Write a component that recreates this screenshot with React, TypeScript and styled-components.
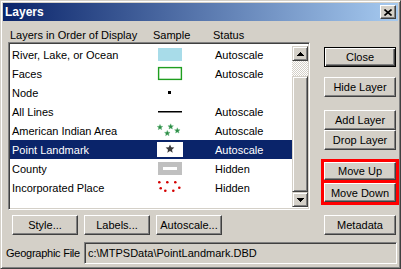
import styled, { createGlobalStyle } from "styled-components";

type SymbolKind = "water" | "faces" | "node" | "lines" | "area" | "landmark" | "county" | "place";

type Layer = {
  name: string;
  status: string;
  symbol: SymbolKind;
  selected?: boolean;
};

const layers: Layer[] = [
  { name: "River, Lake, or Ocean", status: "Autoscale", symbol: "water" },
  { name: "Faces", status: "Autoscale", symbol: "faces" },
  { name: "Node", status: "", symbol: "node" },
  { name: "All Lines", status: "Autoscale", symbol: "lines" },
  { name: "American Indian Area", status: "Autoscale", symbol: "area" },
  { name: "Point Landmark", status: "Autoscale", symbol: "landmark", selected: true },
  { name: "County", status: "Hidden", symbol: "county" },
  { name: "Incorporated Place", status: "Hidden", symbol: "place" },
];

const starPoints = (cx: number, cy: number, r: number) => {
  const pts: string[] = [];
  for (let i = 0; i < 10; i++) {
    const rad = i % 2 === 0 ? r : r * 0.45;
    const a = -Math.PI / 2 + (i * Math.PI) / 5;
    pts.push(`${(cx + rad * Math.cos(a)).toFixed(2)},${(cy + rad * Math.sin(a)).toFixed(2)}`);
  }
  return pts.join(" ");
};

function LayerSymbol({ kind }: { kind: SymbolKind }) {
  return (
    <svg width="28" height="19" viewBox="0 0 28 19">
      {kind === "water" && <rect x="2" y="3" width="24" height="13" fill="#a8dce9" />}
      {kind === "faces" && (
        <rect x="2.6" y="3.6" width="22.8" height="11.8" fill="#fff" stroke="#1f9e1f" strokeWidth="1.4" />
      )}
      {kind === "node" && <rect x="12" y="8" width="3" height="3" fill="#000" />}
      {kind === "lines" && <rect x="2" y="9" width="24" height="1.5" fill="#000" />}
      {kind === "area" &&
        [
          [4, 6.3],
          [14.7, 5.7],
          [11.3, 12.3],
          [21.3, 9.7],
        ].map(([x, y], i) => (
          <polygon key={i} points={starPoints(x, y, 2.9)} fill="#2e8b45" stroke="#4caf6a" strokeWidth="0.4" />
        ))}
      {kind === "landmark" && (
        <>
          <rect x="1" y="2" width="26" height="15" fill="#fff" />
          <polygon points={starPoints(14, 9, 4.6)} fill="#3a3a3a" />
        </>
      )}
      {kind === "county" && (
        <>
          <rect x="2" y="3" width="24" height="13" fill="#c0c0c0" />
          <rect x="7" y="8" width="14" height="3" fill="#fff" />
        </>
      )}
      {kind === "place" &&
        [
          [3.3, 4.3],
          [11.3, 4.3],
          [19.3, 4.3],
          [4.7, 10.3],
          [9.3, 12.7],
          [17.3, 12.7],
          [23.3, 9.7],
        ].map(([x, y], i) => <circle key={i} cx={x} cy={y} r="1.3" fill="#d40000" />)}
    </svg>
  );
}

function Arrow({ down }: { down?: boolean }) {
  return (
    <svg width="7" height="4" viewBox="0 0 7 4" shapeRendering="crispEdges">
      <polygon points={down ? "0,0 7,0 3.5,4" : "0,4 7,4 3.5,0"} fill="#000" />
    </svg>
  );
}

export default function App() {
  return (
    <>
      <GlobalStyle />
      <Window>
        <TitleBar>
          <TitleText>Layers</TitleText>
          <TitleClose>
            <svg width="8" height="7" viewBox="0 0 8 7">
              <path d="M0.5,0.5 L7.5,6.5 M7.5,0.5 L0.5,6.5" stroke="#000" strokeWidth="1.6" />
            </svg>
          </TitleClose>
        </TitleBar>

        <Main>
          <LeftColumn>
            <HeaderRow>
              <span>Layers in Order of Display</span>
              <span>Sample</span>
              <span>Status</span>
            </HeaderRow>
            <ListBox>
              <Items>
                {layers.map((layer) => (
                  <Row key={layer.name} $selected={layer.selected}>
                    <span>{layer.name}</span>
                    <SampleCell>
                      <LayerSymbol kind={layer.symbol} />
                    </SampleCell>
                    <StatusCell>{layer.status}</StatusCell>
                  </Row>
                ))}
              </Items>
              <Scrollbar>
                <ScrollButton>
                  <Arrow />
                </ScrollButton>
                <Track />
                <Thumb />
                <ScrollButton>
                  <Arrow down />
                </ScrollButton>
              </Scrollbar>
            </ListBox>
            <ButtonRow>
              <Button $width={66}>Style...</Button>
              <Button $width={66}>Labels...</Button>
              <Button $width={66}>Autoscale...</Button>
            </ButtonRow>
          </LeftColumn>

          <RightColumn>
            <DefaultButton $top={26}>Close</DefaultButton>
            <Button $top={10}>Hide Layer</Button>
            <Button $top={13}>Add Layer</Button>
            <Button>Drop Layer</Button>
            <Highlight>
              <Button $height={18}>Move Up</Button>
              <HighlightDivider />
              <Button $height={19}>Move Down</Button>
            </Highlight>
            <Button $top={10}>Metadata</Button>
          </RightColumn>
        </Main>

        <Footer>
          <FieldLabel>Geographic File</FieldLabel>
          <Field>c:\MTPSData\PointLandmark.DBD</Field>
        </Footer>
      </Window>
    </>
  );
}

const GlobalStyle = createGlobalStyle`
  html, body {
    margin: 0;
    padding: 0;
    background: #d4d0c8;
  }
`;

const Window = styled.div`
  box-sizing: border-box;
  width: 401px;
  height: 269px;
  background: #d4d0c8;
  border: 1px solid;
  border-color: #d4d0c8 #404040 #404040 #d4d0c8;
  box-shadow: inset 1px 1px #fff, inset -1px -1px #808080;
  padding: 2px;
  display: flex;
  flex-direction: column;
  font-family: "Liberation Sans", Arial, sans-serif;
  font-size: 11px;
  color: #000;
`;

const TitleBar = styled.div`
  height: 18px;
  display: flex;
  align-items: center;
  justify-content: space-between;
  padding: 0 2px;
  background: linear-gradient(to right, #0a246a, #a6caf0);
`;

const TitleText = styled.span`
  color: #fff;
  font-weight: bold;
  font-size: 12px;
`;

const TitleClose = styled.div`
  box-sizing: border-box;
  width: 16px;
  height: 14px;
  display: flex;
  align-items: center;
  justify-content: center;
  background: #d4d0c8;
  border: 1px solid;
  border-color: #fff #404040 #404040 #fff;
  box-shadow: inset -1px -1px #808080;
`;

const Main = styled.div`
  display: flex;
  align-items: flex-start;
`;

const LeftColumn = styled.div`
  margin-left: 5px;
  width: 302px;
  display: flex;
  flex-direction: column;
`;

const HeaderRow = styled.div`
  margin-top: 8px;
  height: 13px;
  line-height: 13px;
  padding-left: 2px;
  display: grid;
  grid-template-columns: 143px 60px 1fr;
  white-space: nowrap;
`;

const ListBox = styled.div`
  box-sizing: border-box;
  height: 168px;
  padding: 1px;
  display: flex;
  background: #fff;
  border: 1px solid;
  border-color: #808080 #fff #fff #808080;
  box-shadow: inset 1px 1px #404040, inset -1px -1px #d4d0c8;
`;

const Items = styled.div`
  flex: 1;
  padding-top: 1px;
`;

const Row = styled.div<{ $selected?: boolean }>`
  height: 19px;
  padding-left: 2px;
  display: grid;
  grid-template-columns: 138px 40px 1fr;
  align-items: center;
  white-space: nowrap;
  background: ${(p) => (p.$selected ? "#0a246a" : "transparent")};
  color: ${(p) => (p.$selected ? "#fff" : "#000")};
`;

const SampleCell = styled.span`
  display: flex;
  justify-content: center;
  height: 19px;
`;

const StatusCell = styled.span`
  padding-left: 25px;
`;

const Scrollbar = styled.div`
  width: 16px;
  margin: 2px 0 1px;
  display: flex;
  flex-direction: column;
`;

const raised = `
  background: #d4d0c8;
  border: 1px solid;
  border-color: #d4d0c8 #404040 #404040 #d4d0c8;
  box-shadow: inset 1px 1px #fff, inset -1px -1px #808080;
`;

const ScrollButton = styled.div`
  box-sizing: border-box;
  height: 15px;
  display: flex;
  align-items: center;
  justify-content: center;
  ${raised}
`;

const Track = styled.div`
  height: 15px;
  background: repeating-conic-gradient(#d4d0c8 0 25%, #fff 0 50%) 0 0 / 2px 2px;
`;

const Thumb = styled.div`
  box-sizing: border-box;
  flex: 1;
  ${raised}
`;

const ButtonRow = styled.div`
  margin-top: 5px;
  padding-left: 4px;
  display: flex;
  gap: 6px;
`;

const RightColumn = styled.div`
  margin-left: 14px;
  width: 72px;
  display: flex;
  flex-direction: column;
`;

const Button = styled.button<{ $top?: number; $width?: number; $height?: number }>`
  box-sizing: border-box;
  width: ${(p) => p.$width ?? 72}px;
  height: ${(p) => p.$height ?? 20}px;
  margin: ${(p) => p.$top ?? 0}px 0 0;
  padding: 0;
  font-family: "Liberation Sans", Arial, sans-serif;
  font-size: 11px;
  color: #000;
  background: #d4d0c8;
  border: 1px solid;
  border-color: #fff #404040 #404040 #fff;
  box-shadow: inset -1px -1px #808080;
  white-space: nowrap;
`;

const DefaultButton = styled(Button)`
  border-color: #000;
  box-shadow: inset 1px 1px #fff, inset -1px -1px #404040, inset -2px -2px #808080;
`;

const Highlight = styled.div`
  margin: 9px -3px 0;
  border: 3px solid #ff0000;
  display: flex;
  flex-direction: column;
`;

const HighlightDivider = styled.div`
  height: 3px;
  background: #ff0000;
`;

const Footer = styled.div`
  margin-top: 7px;
  padding-left: 3px;
  display: flex;
  align-items: center;
`;

const FieldLabel = styled.span`
  width: 78px;
  white-space: nowrap;
  letter-spacing: -0.25px;
`;

const Field = styled.div`
  box-sizing: border-box;
  flex: 1;
  height: 22px;
  margin-right: 1px;
  padding: 1px 3px;
  display: flex;
  align-items: center;
  background: #d4d0c8;
  border: 1px solid;
  border-color: #808080 #fff #fff #808080;
  box-shadow: inset 1px 1px #404040, inset -1px -1px #d4d0c8;
  white-space: nowrap;
`;
